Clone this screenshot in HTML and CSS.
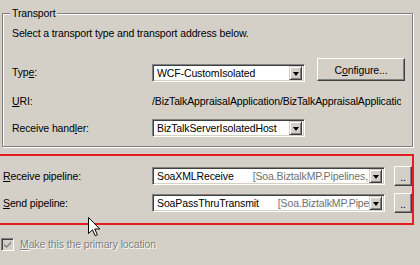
FILE: index.html
```html
<!DOCTYPE html>
<html>
<head>
<meta charset="utf-8">
<link rel="stylesheet" href="styles.css">
</head>
<body>
<div class="page">
  <div class="group">
    <span class="legend">Transport</span>
    <div class="desc">Select a transport type and transport address below.</div>
    <div class="row row-type">
      <span class="label">Typ<u>e</u>:</span>
      <div class="combo combo-short">
        <span class="value">WCF-CustomIsolated</span>
        <span class="drop"><span class="tri"></span></span>
      </div>
      <button class="btn btn-config">C<u>o</u>nfigure...</button>
    </div>
    <div class="row row-uri">
      <span class="label"><u>U</u>RI:</span>
      <span class="uri">/BizTalkAppraisalApplication/BizTalkAppraisalApplication</span>
    </div>
    <div class="row row-handler">
      <span class="label">Receive hand<u>l</u>er:</span>
      <div class="combo combo-short">
        <span class="value">BizTalkServerIsolatedHost</span>
        <span class="drop"><span class="tri"></span></span>
      </div>
    </div>
  </div>

  <div class="pipelines">
    <div class="prow">
      <span class="plabel"><u>R</u>eceive pipeline:</span>
      <div class="combo combo-long">
        <span class="value">SoaXMLReceive<span class="asm">[Soa.BiztalkMP.Pipelines, Version=1.0.0.0]</span></span>
        <span class="drop"><span class="tri"></span></span>
      </div>
      <button class="btn btn-dots">..</button>
    </div>
    <div class="prow">
      <span class="plabel"><u>S</u>end pipeline:</span>
      <div class="combo combo-long">
        <span class="value">SoaPassThruTransmit<span class="asm">[Soa.BiztalkMP.Pipelines, Version=1.0.0.0]</span></span>
        <span class="drop"><span class="tri"></span></span>
      </div>
      <button class="btn btn-dots">..</button>
    </div>
  </div>

  <div class="check-row">
    <span class="checkbox">
      <svg width="9" height="9" viewBox="0 0 9 9"><path d="M1 3.5 L3.5 6 L8 1.5 L8 3.5 L3.5 8 L1 5.5 Z" fill="#808080"/></svg>
    </span>
    <span class="check-label"><u>M</u>ake this the primary location</span>
  </div>

  <div class="highlight"></div>
  <svg class="cursor" width="13" height="20" viewBox="0 0 13 20">
    <path d="M0.5 0.5 L0.5 16.5 L4.5 12.8 L7.2 18.8 L9.4 17.8 L6.8 12 L11.8 12 Z" fill="#fff" stroke="#000" stroke-width="1" stroke-linejoin="miter"/>
  </svg>
</div>
</body>
</html>
```

FILE: styles.css
```css
html, body {
  margin: 0;
  padding: 0;
}
body {
  width: 420px;
  height: 265px;
  overflow: hidden;
  background: #d4d0c8;
  font-family: "Liberation Sans", Arial, sans-serif;
  font-size: 10.5px;
  letter-spacing: -0.12px;
  color: #000;
}
.page {
  position: relative;
  display: flow-root;
  width: 420px;
  height: 265px;
}
u {
  text-decoration: underline;
  text-underline-offset: 1px;
}

/* group box */
.group {
  position: relative;
  margin: 13px 0 0 2px;
  width: 411px;
  box-sizing: border-box;
  border: 1px solid #808080;
  box-shadow: inset 1px 1px 0 #fff, 1px 1px 0 #fff;
  padding: 13px 9px 9px 9px;
}
.legend {
  position: absolute;
  top: -7px;
  left: 7px;
  padding: 0 2px;
  line-height: 13px;
  background: #d4d0c8;
}
.desc {
  line-height: 13px;
  height: 13px;
}
.row {
  display: flex;
}
.label {
  width: 140px;
  flex: none;
  line-height: 13px;
}
.row-type {
  margin-top: 18px;
  height: 24px;
  align-items: flex-end;
}
.row-type .label {
  margin-bottom: 3px;
}
.row-uri {
  margin-top: 13px;
  height: 13px;
  align-items: center;
  line-height: 13px;
}
.uri {
  white-space: nowrap;
  overflow: hidden;
  width: 249px;
}
.row-handler {
  margin-top: 11px;
  height: 18px;
  align-items: center;
}

/* combo box */
.combo {
  flex: none;
  height: 18px;
  box-sizing: border-box;
  display: flex;
  align-items: center;
  background: #fff;
  border: 1px solid;
  border-color: #808080 #fff #fff #808080;
  box-shadow: inset 1px 1px 0 #404040, inset -1px -1px 0 #d4d0c8;
  padding: 1px 2px 1px 4px;
}
.combo-short { width: 153px; }
.combo-long { width: 233px; }
.value {
  flex: 1;
  min-width: 0;
  overflow: hidden;
  white-space: nowrap;
  line-height: 13px;
}
.asm {
  color: #707070;
  margin-left: 19px;
}
.drop {
  flex: none;
  width: 13px;
  height: 14px;
  box-sizing: border-box;
  background: #d4d0c8;
  border: 1px solid;
  border-color: #d4d0c8 #404040 #404040 #d4d0c8;
  box-shadow: inset 1px 1px 0 #fff, inset -1px -1px 0 #808080;
  display: flex;
  align-items: center;
  justify-content: center;
}
.tri {
  width: 0;
  height: 0;
  border-left: 3.5px solid transparent;
  border-right: 3.5px solid transparent;
  border-top: 4px solid #000;
  margin-top: 1px;
}

/* buttons */
.btn {
  flex: none;
  font: inherit;
  letter-spacing: inherit;
  color: #000;
  background: #d4d0c8;
  box-sizing: border-box;
  border: 1px solid;
  border-color: #fff #404040 #404040 #fff;
  box-shadow: inset -1px -1px 0 #808080;
  padding: 0;
  margin: 0;
}
.btn-config {
  margin-left: 12px;
  width: 88px;
  height: 23px;
  align-self: flex-start;
}
.btn-dots {
  margin-left: 9px;
  width: 18px;
  height: 20px;
  line-height: 14px;
  padding-top: 2px;
}

/* pipelines */
.pipelines {
  margin-top: 19px;
  padding-left: 3px;
}
.prow {
  display: flex;
  align-items: center;
  height: 20px;
}
.prow + .prow {
  margin-top: 7px;
}
.plabel {
  width: 149px;
  flex: none;
  line-height: 13px;
}

/* checkbox */
.check-row {
  margin-top: 25px;
  padding-left: 1px;
  display: flex;
  align-items: center;
  height: 13px;
}
.checkbox {
  width: 13px;
  height: 13px;
  box-sizing: border-box;
  border: 1px solid;
  border-color: #808080 #fff #fff #808080;
  box-shadow: inset 1px 1px 0 #404040, inset -1px -1px 0 #d4d0c8;
  background: #d4d0c8;
  display: flex;
  align-items: center;
  justify-content: center;
}
.checkbox svg {
  display: block;
}
.check-label {
  margin-left: 6px;
  color: #808080;
  text-shadow: 1px 1px 0 #fff;
  line-height: 13px;
}

/* annotation overlays */
.highlight {
  position: absolute;
  left: -4px;
  top: 154px;
  width: 418px;
  height: 71px;
  box-sizing: border-box;
  border: 2px solid #e41e20;
}
.cursor {
  position: absolute;
  left: 88px;
  top: 217px;
}
```
